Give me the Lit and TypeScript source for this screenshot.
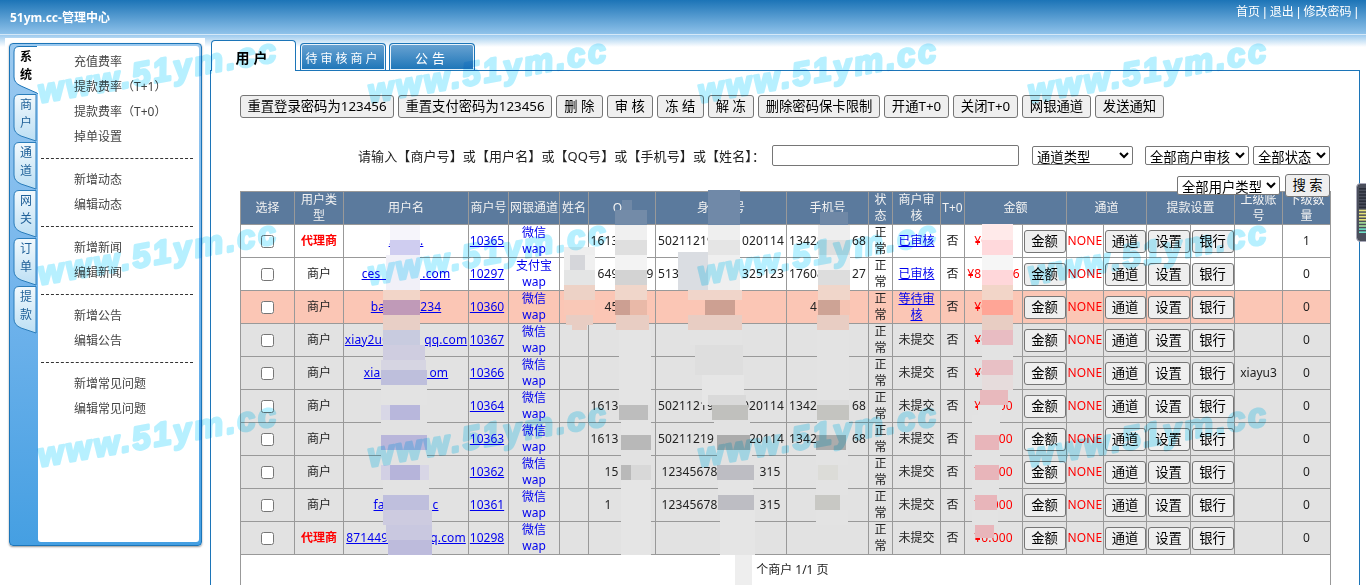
import { LitElement, html, css, svg } from 'lit';
import { customElement } from 'lit/decorators.js';

// figure spaces keep the digit widths where the screenshot is pixelated
const g = (n: number) => '\u2007'.repeat(n);

const sideTabs = ['系统', '商户', '通道', '网关', '订单', '提款'];

const menuGroups = [
  ['充值费率', '提款费率（T+1）', '提款费率（T+0）', '掉单设置'],
  ['新增动态', '编辑动态'],
  ['新增新闻', '编辑新闻'],
  ['新增公告', '编辑公告'],
  ['新增常见问题', '编辑常见问题'],
];

const actions = ['重置登录密码为123456', '重置支付密码为123456', '删 除', '审 核', '冻 结', '解 冻', '删除密码保卡限制', '开通T+0', '关闭T+0', '网银通道', '发送通知'];

const colWidths = [54, 49, 125, 40, 51, 29, 67, 131, 82, 24, 48, 24, 58, 44, 37, 43, 44, 44, 48, 48];

interface Row {
  kind: string; agent?: boolean; user: string; id: string; bank: string; qq: string; card: string; phone: string;
  audit: string; amount: string; parent: string; subs: string;
}

const card1 = `50211219${g(4)}020114`;
const card2 = `123456789${g(5)}315`;
const phone1 = `13428${g(4)}68`;

const rows: Row[] = [
  { kind: 'plain', agent: true, user: `.${g(4)}.`, id: '10365', bank: '微信', qq: `1613${g(5)}`, card: card1, phone: phone1, audit: '已审核', amount: '¥0.000', parent: '', subs: '1' },
  { kind: 'plain', user: `ces${g(6)}.com`, id: '10297', bank: '支付宝', qq: `${g(1)}649${g(4)}9`, card: `513${g(9)}325123`, phone: `17608${g(4)}27`, audit: '已审核', amount: `¥8${g(3)}.06`, parent: '', subs: '0' },
  { kind: 'hot', user: `ba${g(5)}234`, id: '10360', bank: '微信', qq: `45${g(3)}`, card: '', phone: `4${g(4)}`, audit: '等待审核', amount: '¥0.000', parent: '', subs: '0' },
  { kind: 'gray', user: `xiay2u0${g(5)}qq.com`, id: '10367', bank: '微信', qq: '', card: '', phone: '', audit: '', amount: '¥0.000', parent: '', subs: '0' },
  { kind: 'gray', user: `xia${g(7)}om`, id: '10366', bank: '微信', qq: '', card: '', phone: '', audit: '', amount: '¥0.000', parent: 'xiayu3', subs: '0' },
  { kind: 'gray', user: '', id: '10364', bank: '微信', qq: `1613${g(5)}`, card: card1, phone: phone1, audit: '', amount: '¥0.000', parent: '', subs: '0' },
  { kind: 'gray', user: '', id: '10363', bank: '微信', qq: `1613${g(5)}`, card: card1, phone: phone1, audit: '', amount: '¥0.000', parent: '', subs: '0' },
  { kind: 'gray', user: '', id: '10362', bank: '微信', qq: `15${g(3)}`, card: card2, phone: '', audit: '', amount: '¥0.000', parent: '', subs: '0' },
  { kind: 'gray', user: `fas${g(6)}c`, id: '10361', bank: '微信', qq: `1${g(4)}`, card: card2, phone: '', audit: '', amount: '¥0.000', parent: '', subs: '0' },
  { kind: 'gray', agent: true, user: `871449${g(6)}q.com`, id: '10298', bank: '微信', qq: '', card: '', phone: '', audit: '', amount: '¥0.000', parent: '', subs: '0' },
];

// the pixelated patches of the screenshot: x, y, w, h, colour
const mosaic: [number, number, number, number, string][] = [
  // user name
  [390, 225, 30, 15, '#f6f5fb'], [390, 240, 30, 15, '#cfcdf0'], [386, 255, 34, 35, '#f1f0f8'],
  [383, 290, 37, 10, '#f2d5c8'], [383, 300, 37, 15, '#c09ab8'], [383, 315, 37, 15, '#e8cfc6'],
  [383, 330, 37, 15, '#c8cbdf'], [383, 345, 42, 15, '#cfcde0'], [381, 360, 45, 10, '#d6d5e2'], [381, 370, 46, 15, '#bebfdc'],
  [381, 385, 46, 20, '#e3e3e3'], [381, 405, 9, 15, '#d8d7e6'], [390, 405, 30, 15, '#b8b7dc'], [381, 420, 46, 15, '#e2e2e2'],
  [381, 435, 46, 15, '#b9b6da'], [381, 450, 46, 15, '#e2e2e2'], [381, 465, 9, 15, '#d2d0e4'], [390, 465, 30, 15, '#b6b4da'], [420, 465, 9, 15, '#d8d6e6'],
  [383, 480, 46, 15, '#e3e3e3'], [383, 495, 46, 15, '#bfbfdd'], [383, 510, 49, 15, '#cdcbe0'],
  [386, 525, 46, 15, '#c9c8e0'], [388, 540, 44, 15, '#bdbbdc'],
  // name
  [564, 247, 31, 8, '#eeeeee'], [564, 255, 9, 15, '#eeeeee'], [570, 255, 15, 15, '#d5d6da'], [585, 255, 10, 15, '#f0f0f0'],
  [564, 270, 31, 15, '#e4e5e5'], [564, 285, 31, 15, '#edd2c6'], [564, 300, 31, 15, '#f9c8b7'], [566, 315, 27, 10, '#e8cdc3'], [572, 325, 15, 5, '#e8cdc3'],
  // qq
  [622, 200, 10, 25, '#6f88a6'], [615, 210, 32, 15, '#738ba8'], [615, 225, 32, 15, '#f0f0f0'], [615, 240, 32, 15, '#dfdfdf'], [615, 255, 32, 15, '#f3f3f3'],
  [615, 270, 32, 15, '#d3d3d3'], [615, 285, 32, 15, '#f0d6ca'], [615, 300, 15, 15, '#cc9f92'], [630, 300, 17, 15, '#e9b9a8'], [616, 315, 33, 15, '#e8cdc3'],
  [619, 330, 32, 75, '#e4e4e4'], [619, 405, 29, 15, '#bdbdbd'], [621, 420, 30, 15, '#e4e4e4'], [621, 435, 30, 15, '#b8b8b8'], [621, 450, 30, 15, '#e2e2e2'],
  [621, 465, 10, 15, '#b9b9b9'], [631, 465, 20, 15, '#d8d8d8'], [621, 480, 30, 75, '#e5e5e5'],
  // card
  [708, 190, 32, 35, '#7089a8'], [708, 225, 32, 15, '#efefef'], [708, 240, 32, 15, '#e5e5e5'], [708, 255, 32, 40, '#efefef'],
  [678, 252, 30, 38, '#dadde2'], [688, 290, 54, 10, '#f0d5ca'], [705, 300, 30, 15, '#cda092'], [688, 315, 54, 15, '#e8cdc3'],
  [690, 330, 52, 15, '#e3e3e3'], [695, 345, 48, 30, '#dedede'], [702, 375, 42, 30, '#e6e6e6'], [708, 395, 38, 10, '#d9d9d9'],
  [712, 405, 36, 15, '#c0c0bd'], [714, 420, 36, 15, '#e2e2e2'], [717, 435, 33, 15, '#ababab'], [717, 450, 35, 15, '#e2e2e2'],
  [717, 465, 37, 15, '#bdbdc3'], [718, 480, 35, 15, '#e4e4e4'], [718, 495, 36, 15, '#bdbdc3'], [720, 510, 35, 45, '#e5e5e5'],
  [735, 555, 17, 30, '#eeeeee'],
  // phone
  [820, 212, 28, 13, '#6f88a6'], [818, 225, 32, 15, '#eeeeee'], [818, 240, 32, 15, '#dfdfdf'], [818, 255, 32, 15, '#f0f0f0'], [818, 270, 32, 15, '#dddddd'],
  [818, 285, 32, 15, '#f0d6ca'], [818, 300, 22, 15, '#cda395'], [840, 300, 10, 15, '#f5c4b3'], [817, 315, 32, 15, '#e8cdc3'],
  [817, 330, 32, 75, '#e3e3e3'], [817, 400, 32, 5, '#dddddd'], [817, 405, 32, 15, '#c4c4c0'], [817, 420, 32, 15, '#e3e3e3'], [816, 435, 30, 15, '#acacac'],
  [816, 450, 32, 15, '#e3e3e3'], [818, 465, 20, 15, '#dcdcd8'], [816, 480, 32, 15, '#e3e3e3'], [815, 495, 25, 15, '#c8c8c4'], [816, 510, 32, 15, '#e3e3e3'],
  // amount
  [982, 224, 31, 16, '#ffeaea'], [982, 240, 31, 15, '#ffd9dc'], [982, 255, 31, 15, '#f6f6f6'], [982, 270, 31, 15, '#ffd7da'], [982, 285, 31, 15, '#f2d5c8'],
  [982, 300, 31, 15, '#ffa596'], [982, 315, 31, 15, '#e8cdc3'], [982, 330, 31, 15, '#e8bcc2'], [982, 345, 31, 15, '#e3e3e3'], [982, 360, 31, 15, '#e8c0c5'],
  [982, 375, 31, 15, '#e6dcdc'], [980, 390, 28, 15, '#e8b9bd'], [978, 405, 24, 10, '#e3e3e3'], [975, 435, 24, 15, '#e8b5ba'], [972, 415, 28, 20, '#e3e3e3'],
  [972, 450, 28, 15, '#e3e3e3'], [975, 465, 24, 15, '#e8b5ba'], [972, 480, 27, 15, '#e3e3e3'], [975, 495, 22, 15, '#e8b5ba'], [972, 510, 26, 15, '#e3e3e3'],
  [975, 525, 19, 13, '#e8b5ba'],
];

const stampX = [40, 370, 700, 1030];
const stampY = [103, 285, 467];

@customElement('app-root')
export class AppRoot extends LitElement {
  static styles = css`
    :host {
      display: block;
      position: relative;
      height: 585px;
      overflow: hidden;
      background: #fff;
      font-family: 'Noto Sans', 'Noto Sans CJK SC', sans-serif;
      font-size: 12px;
      color: #222;
    }

    .top {
      height: 34px;
      border-bottom: 1px solid #d5e8f7;
      background: linear-gradient(#1c74b7, #8fc2ea);
      display: flex;
      justify-content: space-between;
      color: #fff;
    }
    .brand { font-weight: 700; padding: 9px 0 0 10px; line-height: 17px; }
    .links { padding: 4px 8px 0 0; line-height: 17px; font-family: 'Liberation Sans', 'Noto Sans CJK SC', sans-serif; }

    .page {
      display: flex;
      background: linear-gradient(#9ccaee, #fff) no-repeat;
      background-size: 100% 12px;
      min-height: 550px;
    }

    .side-wrap {
      margin: 3px 0 0 5px;
      width: 200px;
      box-sizing: border-box;
      padding: 5px 3px 0 4px;
      background: #fff;
      flex: none;
    }
    .side {
      height: 503px;
      box-sizing: border-box;
      border: 1px solid #1c75b8;
      border-radius: 4px;
      padding: 2px 2px 3px 3px;
      background: linear-gradient(#9ccaf0, #72b4ec 50%, #459fe2);
      box-shadow: 0 1px 2px #999;
      display: flex;
    }
    .side-tabs { width: 25px; flex: none; }
    .side-tab {
      position: relative;
      height: 48px;
      width: 25px;
      text-align: center;
      line-height: 18px;
      color: #1f6098;
      box-sizing: border-box;
      padding: 2px 1px 0 2px;
    }
    .side-tab svg { position: absolute; left: 0; top: 0; }
    .side-tab span { position: relative; display: block; width: 12px; margin: 0 auto; }
    .side-tab.on { color: #000; font-weight: 700; }
    .side-body {
      flex: 1;
      background: #fff;
      border-radius: 0 3px 3px 3px;
      padding-top: 3px;
      color: #444;
    }
    .menu-item { height: 25px; line-height: 25px; padding-left: 36px; }
    .sep { border-top: 1px dashed #333; margin: 9px 6px 8px 3px; }

    .main { flex: 1; padding: 5px 6px 0 0; margin-left: 5px; min-width: 0; }
    .tabs { display: flex; align-items: flex-end; gap: 4px; height: 31px; margin: 0 0 -1px 1px; position: relative; }
    .tab {
      box-sizing: border-box;
      text-align: center;
      border: 1px solid #1c75b8;
      border-bottom: none;
      border-radius: 4px 4px 0 0;
    }
    .tab.on {
      width: 85px;
      height: 31px;
      background: #fff;
      color: #000;
      font-size: 14px;
      font-weight: 700;
      letter-spacing: 4px;
      line-height: 33px;
    }
    .tab.off {
      width: 86px;
      height: 27px;
      margin-bottom: 1px;
      background: linear-gradient(#6aa3d2, #1c75b8);
      box-shadow: inset 0 0 0 1px #e8f2fa;
      color: #fff;
      letter-spacing: 3px;
      line-height: 29px;
    }
    .tab.wide { letter-spacing: 4px; font-size: 13px; margin-left: -1px; }

    .panel {
      border: 1px solid #1c75b8;
      padding: 24px 29px 0;
      height: 560px;
      box-sizing: border-box;
    }

    button, select, input {
      font-family: 'Noto Sans', 'Noto Sans CJK SC', sans-serif;
      font-size: 13.33px;
      box-sizing: border-box;
      color: #000;
    }
    button {
      height: 23px;
      padding: 0;
      border: 1px solid #767676;
      border-radius: 3px;
      background: #efefef;
      line-height: 19px;
    }

    .actions { display: flex; gap: 4px; }
    .actions button { flex: none; white-space: nowrap; }
    .actions button.reset { width: 154px; }
    .actions button.spaced { width: 46.5px; }
    .actions button.wide { width: 122px; }
    .actions button.wide2 { width: 69px; }
    .actions button.wide3 { width: 65px; }

    .filter { display: flex; justify-content: flex-end; align-items: center; margin-top: 27px; height: 21px; }
    .filter label { font-size: 13px; letter-spacing: .1px; margin-right: 7px; white-space: nowrap; }
    .filter input { width: 247px; height: 21px; border: 1px solid #767676; border-radius: 2px; }
    select { height: 19px; border: 1px solid #767676; border-radius: 2px; background: #fff; padding: 0; }
    .s-channel { width: 101px; margin-left: 13px; }
    .s-audit { width: 104px; margin-left: 12px; }
    .s-state { width: 77px; margin-left: 4px; }

    .filter2 { display: flex; justify-content: flex-end; align-items: center; gap: 5px; margin: 8px 0 -5px; height: 22px; position: relative; z-index: 1; }
    .s-type { width: 103px; }
    .go { width: 45px; }

    table { border-collapse: collapse; table-layout: fixed; width: 1090px; text-align: center; line-height: 16px; }
    th, td { border: 1px solid #999; padding: 0; height: 32px; }
    th { background: #5b7a9d; color: #f2f2f2; font-weight: 400; }
    th.tight { padding: 0 4px; }
    tr.plain td { background: #fff; }
    tr.hot td { background: #fbc6b5; }
    tr.gray td { background: #e2e2e2; }
    td.nw { white-space: nowrap; overflow: hidden; letter-spacing: .14px; }
    td.id { padding-right: 3px; }
    a { color: #00e; }
    a.plain { text-decoration: none; }
    .red { color: #f00; }
    .agent { color: #f00; font-weight: 700; }
    .box { margin: 0; vertical-align: middle; }
    td button { display: block; width: calc(100% - 1px); margin: 0 auto; }
    td.foot { background: #fff; height: 40px; vertical-align: top; padding-top: 7px; line-height: 16px; border-bottom: none; }

    .layer { position: absolute; left: 0; top: 0; pointer-events: none; }
    .stamps { mix-blend-mode: multiply; }
    .stamps text {
      font-family: 'Liberation Sans', sans-serif;
      font-size: 33px;
      font-style: italic;
      font-weight: 700;
      letter-spacing: 2.6px;
      fill: #b7f0ff;
      stroke: #b7f0ff;
      stroke-width: 2.6px;
      stroke-linejoin: round;
    }
  `;

  renderSideTab(label: string, i: number) {
    const on = i === 0;
    return html`<div class="side-tab ${on ? 'on' : ''}">
      <svg width="25" height="48" viewBox="0 0 25 48">
        ${on
          ? svg`<path d="M25 .5H6Q1 .5 1 6V31Q1 37 8 40L25 47.5Z" fill="#fff" stroke="#1c75b8"/><path d="M24.5 0V47" stroke="#fff" fill="none"/>`
          : svg`<defs><linearGradient id="t${i}" x1="0" y1="0" x2="0" y2="1"><stop offset="0" stop-color="#f2f9fd"/><stop offset="1" stop-color="#bcdff4"/></linearGradient></defs>
               <path d="M23 .5H6Q1 .5 1 6V33Q1 39 8 42L23 47V.5Z" fill="url(#t${i})" stroke="#2a7dbb"/>`}
      </svg>
      <span>${label}</span>
    </div>`;
  }

  renderRow(r: Row) {
    return html`<tr class=${r.kind}>
      <td><input class="box" type="checkbox" /></td>
      <td class=${r.agent ? 'agent' : ''}>${r.agent ? '代理商' : '商户'}</td>
      <td class="nw">${r.user ? html`<a href="#">${r.user}</a>` : ''}</td>
      <td class="id"><a href="#">${r.id}</a></td>
      <td><a class="plain" href="#">${r.bank}</a><br /><a class="plain" href="#">wap</a></td>
      <td></td>
      <td class="nw">${r.qq}</td>
      <td class="nw">${r.card}</td>
      <td class="nw">${r.phone}</td>
      <td>正常</td>
      <td>${r.audit ? html`<a href="#">${r.audit}</a>` : '未提交'}</td>
      <td>否</td>
      <td class="red nw">${r.amount}</td>
      <td><button>金额</button></td>
      <td class="red nw">NONE</td>
      <td><button>通道</button></td>
      <td><button>设置</button></td>
      <td><button>银行</button></td>
      <td>${r.parent}</td>
      <td>${r.subs}</td>
    </tr>`;
  }

  render() {
    return html`
      <div class="top">
        <div class="brand">51ym.cc-管理中心</div>
        <div class="links">首页 | 退出 | 修改密码 |</div>
      </div>
      <div class="page">
        <div class="side-wrap">
          <div class="side">
            <div class="side-tabs">${sideTabs.map((t, i) => this.renderSideTab(t, i))}</div>
            <div class="side-body">
              ${menuGroups.map(
                (group, i) => html`
                  ${i > 0 ? html`<div class="sep"></div>` : ''}
                  ${group.map((m) => html`<div class="menu-item">${m}</div>`)}
                `,
              )}
            </div>
          </div>
        </div>
        <div class="main">
          <div class="tabs">
            <div class="tab on">用户</div>
            <div class="tab off">待审核商户</div>
            <div class="tab off wide">公告</div>
          </div>
          <div class="panel">
            <div class="actions">
              ${actions.map((a, i) => {
                const cls = i < 2 ? 'reset' : a.includes(' ') ? 'spaced' : i === 6 ? 'wide' : i > 8 ? 'wide2' : 'wide3';
                return html`<button class=${cls}>${a}</button>`;
              })}
            </div>
            <div class="filter">
              <label>请输入【商户号】或【用户名】或【QQ号】或【手机号】或【姓名】：</label>
              <input type="text" />
              <select class="s-channel"><option>通道类型</option></select>
              <select class="s-audit"><option>全部商户审核</option></select>
              <select class="s-state"><option>全部状态</option></select>
            </div>
            <div class="filter2">
              <select class="s-type"><option>全部用户类型</option></select>
              <button class="go">搜 索</button>
            </div>
            <table>
              <colgroup>${colWidths.map((w) => html`<col style="width:${w}px" />`)}</colgroup>
              <thead>
                <tr>
                  <th>选择</th><th class="tight">用户类型</th><th>用户名</th><th>商户号</th><th>网银通道</th><th>姓名</th><th>QQ</th>
                  <th>身份证号</th><th>手机号</th><th>状态</th><th>商户审核</th><th>T+0</th>
                  <th colspan="2">金额</th><th colspan="2">通道</th><th colspan="2">提款设置</th>
                  <th>上级账号</th><th>下级数量</th>
                </tr>
              </thead>
              <tbody>
                ${rows.map((r) => this.renderRow(r))}
                <tr><td class="foot" colspan="20">${g(2)}个商户 1/1 页</td></tr>
              </tbody>
            </table>
          </div>
        </div>
      </div>

      <svg class="layer" width="1366" height="585">
        ${mosaic.map(([x, y, w, h, c]) => svg`<rect x=${x} y=${y} width=${w} height=${h} fill=${c} />`)}
      </svg>
      <svg class="layer stamps" width="1366" height="585">
        ${stampY.map((y) =>
          stampX.map((x) => svg`<text x=${x} y=${y} transform="rotate(-10 ${x} ${y})">www.51ym.cc</text>`),
        )}
      </svg>
      <svg class="layer" style="left:1356px;top:183px" width="10" height="60">
        <rect x=".5" y=".5" width="14" height="58" rx="4" fill="#4b4f5c" stroke="#aab" />
        ${Array.from({ length: 15 }, (_, i) => {
          const c = i < 7 ? '#2b2f3a' : i < 11 ? '#e6e27a' : i < 13 ? '#a6e29a' : '#6fe0c8';
          return svg`<rect x="3" y=${5 + i * 3.1} width="7" height="1.6" fill=${c} />`;
        })}
      </svg>
    `;
  }
}
